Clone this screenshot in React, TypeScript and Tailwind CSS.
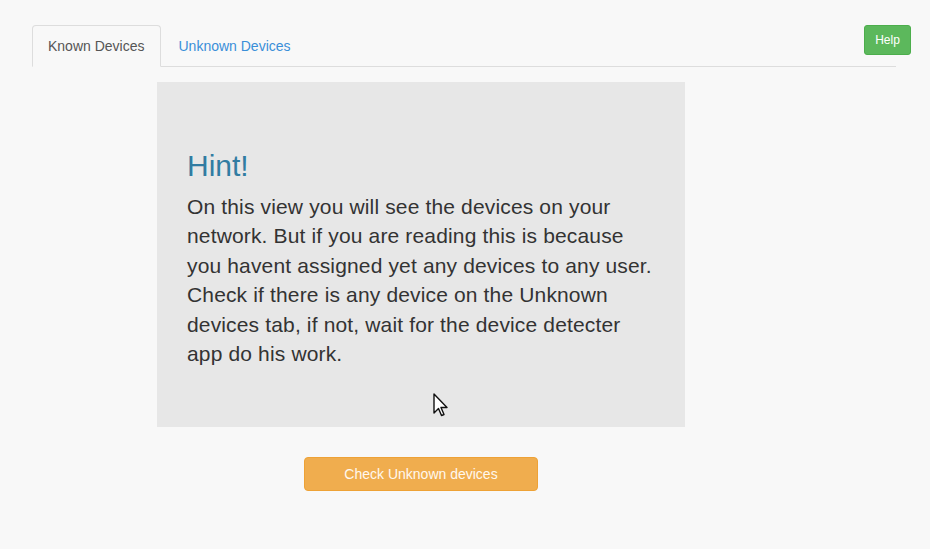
import React from 'react';

const Cursor = () => (
    <svg
        className="absolute left-[433px] top-[393px]"
        width="18"
        height="26"
        viewBox="0 0 18 26"
    >
        <path
            d="M1 1 L1 20 L5.5 15.5 L8.5 22.5 L11 21.5 L8 14.5 L14 14.5 Z"
            fill="#fff"
            stroke="#111"
            strokeWidth="1.4"
            strokeLinejoin="round"
        />
    </svg>
);

const App = () => {
    return (
        <div className="relative min-h-[549px] bg-[#f8f8f8] font-['Liberation_Sans',Arial,sans-serif] text-[#333]">
            {/* Tabs */}
            <div className="pt-[25px] pl-[32px] w-[896px]">
                <ul className="flex border-b border-[#ddd]">
                    <li className="-mb-px mr-[2px] border border-[#ddd] border-b-transparent rounded-t-[4px] bg-[#f8f8f8] px-[15px] py-[10px] text-[14px] leading-[20px] text-[#555]">
                        Known Devices
                    </li>
                    <li className="-mb-px border border-transparent px-[15px] py-[10px] text-[14px] leading-[20px] text-[#3a8fd8]">
                        Unknown Devices
                    </li>
                </ul>
            </div>

            {/* Help */}
            <button className="absolute left-[864px] top-[25px] h-[30px] w-[47px] rounded-[3px] border border-[#4cae4c] bg-[#5cb85c] text-[12px] leading-[18px] text-white">
                Help
            </button>

            {/* Hint box */}
            <div className="ml-[157px] mt-[15px] h-[345px] w-[528px] bg-[#e7e7e7] px-[30px] pt-[67px]">
                <h2 className="text-[30px] leading-[33px] text-[#317ca2]">Hint!</h2>
                <p className="mt-[10px] text-[21px] leading-[29.4px] tracking-[0.15px] text-[#333]">
                    On this view you will see the devices on your network. But if you are reading this is
                    because you havent assigned yet any devices to any user. Check if there is any device on
                    the Unknown devices tab, if not, wait for the device detecter app do his work.
                </p>
            </div>

            {/* Action */}
            <div className="ml-[304px] mt-[30px]">
                <button className="h-[34px] w-[234px] rounded-[4px] border border-[#eea236] bg-[#f0ad4e] text-[14px] leading-[20px] text-[#fff8ee]">
                    Check Unknown devices
                </button>
            </div>

            <Cursor />
        </div>
    );
};

export default App;
